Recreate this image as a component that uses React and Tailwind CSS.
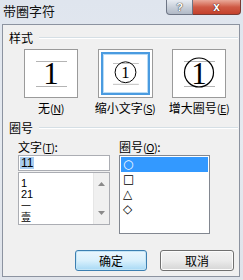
import React from 'react';

const cjk = { fontFamily: '"Noto Sans CJK SC", "Liberation Sans", sans-serif' };
const shapes = { fontFamily: '"DejaVu Sans", sans-serif' };

function Acc({ k }) {
  return (
    <span className="text-[11px] tracking-[-0.5px]">
      (<span className="underline">{k}</span>)
    </span>
  );
}

function GroupHeader({ title }) {
  return (
    <div className="flex items-center h-[14px] pl-[6px]">
      <span className="text-[12px] leading-[14px]">{title}</span>
      <div className="flex-1 ml-[6px] mr-[1px] border-t border-[#d5dfe5] border-b-white border-b h-0" />
    </div>
  );
}

function Preview({ kind }) {
  return (
    <svg width="54" height="49" viewBox="0 0 54 49">
      <line x1="12" y1="12.5" x2="43" y2="12.5" stroke="#b4b4b4" />
      <line x1="12" y1="37.5" x2="43" y2="37.5" stroke="#b4b4b4" />
      {kind === 'none' && (
        <text x="27" y="35" textAnchor="middle" fontFamily="Liberation Serif" fontSize="31" fill="#000">1</text>
      )}
      {kind === 'small' && (
        <>
          <circle cx="27" cy="23" r="12.5" fill="none" stroke="#000" strokeWidth="1.2" />
          <text x="27" y="30" textAnchor="middle" fontFamily="Liberation Serif" fontSize="20" fill="#000">1</text>
        </>
      )}
      {kind === 'big' && (
        <>
          <circle cx="27" cy="23.5" r="14.5" fill="none" stroke="#000" strokeWidth="1.2" />
          <text x="27" y="35" textAnchor="middle" fontFamily="Liberation Serif" fontSize="31" fill="#000">1</text>
        </>
      )}
    </svg>
  );
}

export default function App() {
  return (
    <div
      className="w-[243px] h-[280px] flex flex-col bg-gradient-to-b from-[#dfe5ee] via-[#e6eaf0] to-[#dfe3ea] text-black overflow-hidden"
      style={cjk}
    >
      {/* Title bar */}
      <div className="h-[24px] flex items-start shrink-0">
        <div className="pl-[3px] pt-[2px] text-[13px] leading-[18px] text-[#111]">带圈字符</div>
        <div className="ml-auto mr-[2px] flex">
          <div className="w-[27px] h-[15px] rounded-bl-[4px] border border-t-0 border-[#6d7585] bg-gradient-to-b from-[#e8ecf2] via-[#c9d0da] to-[#b0b9c6] flex items-center justify-center">
            <span className="text-[11px] leading-[11px] font-bold text-white [text-shadow:0_0_1px_#333,0_0_1px_#333]" style={{ fontFamily: 'Liberation Sans' }}>?</span>
          </div>
          <div className="w-[48px] h-[15px] rounded-br-[4px] border border-l-0 border-t-0 border-[#7a3a33] bg-gradient-to-b from-[#e9a99a] via-[#cf5a45] to-[#c4412c] flex items-center justify-center">
            <span className="text-[12px] leading-[12px] font-bold text-white [text-shadow:0_0_1px_#4a1a10,0_0_1px_#4a1a10]" style={{ fontFamily: 'Liberation Sans' }}>x</span>
          </div>
        </div>
      </div>

      {/* Client area */}
      <div className="flex-1 ml-[2px] mr-[3px] mb-[3px] border border-[#8c93a0] bg-[#f0f0f0] flex flex-col text-[12px] leading-[14px]">
        <div className="mt-[6px]">
          <GroupHeader title="样式" />
        </div>

        <div className="flex pl-[11px] mt-[4px]">
          <div className="w-[74px] flex flex-col items-center">
            <div className="w-[54px] h-[49px] border border-[#9a9a9a] bg-white">
              <div className="-m-px"><Preview kind="none" /></div>
            </div>
            <div className="mt-[3px] h-[14px]">无<Acc k="N" /></div>
          </div>
          <div className="w-[74px] flex flex-col items-center">
            <div className="w-[55px] h-[49px] border border-[#9a9a9a] bg-white p-[2px]">
              <div className="w-full h-full border-2 border-[#4a9be0] shadow-[inset_0_0_0_1px_#b9dcf6] flex items-center justify-center overflow-hidden">
                <Preview kind="small" />
              </div>
            </div>
            <div className="mt-[3px] h-[14px] whitespace-nowrap">缩小文字<Acc k="S" /></div>
          </div>
          <div className="w-[74px] flex flex-col items-center">
            <div className="w-[54px] h-[49px] border border-[#9a9a9a] bg-white">
              <div className="-m-px"><Preview kind="big" /></div>
            </div>
            <div className="mt-[3px] h-[14px] whitespace-nowrap">增大圈号<Acc k="E" /></div>
          </div>
        </div>

        <div className="mt-[6px]">
          <GroupHeader title="圈号" />
        </div>

        <div className="flex pl-[15px] mt-[5px] gap-[9px]">
          {/* 文字 column */}
          <div className="w-[92px] flex flex-col">
            <div className="h-[14px]">文字<Acc k="T" />:</div>
            <div className="mt-[1px] h-[16px] border border-[#abadb3] bg-white flex items-center pl-[1px]">
              <span className="bg-[#a8cdf0] px-[1px] text-[12px] leading-[12px] h-[12px]" style={{ fontFamily: 'Liberation Sans' }}>11</span>
            </div>
            <div className="mt-[1px] h-[53px] border border-[#abadb3] bg-white flex overflow-hidden">
              <div className="flex-1 pl-[2px] pt-[5px] text-[11px]">
                <div className="h-[11px] leading-[11px]" style={{ fontFamily: 'Liberation Sans' }}>1</div>
                <div className="h-[11px] leading-[11px]" style={{ fontFamily: 'Liberation Sans' }}>21</div>
                <div className="h-[11px] leading-[11px] text-[10px]">一</div>
                <div className="h-[11px] leading-[11px] text-[10px]">壹</div>
              </div>
              <div className="w-[16px] bg-[#f0f0f0] border-l border-[#e6e6e6] flex flex-col items-center justify-between py-[9px]">
                <svg width="7" height="4" viewBox="0 0 7 4"><path d="M0 4 L3.5 0 L7 4 Z" fill="#8a8a8a" /></svg>
                <svg width="7" height="4" viewBox="0 0 7 4"><path d="M0 0 L3.5 4 L7 0 Z" fill="#8a8a8a" /></svg>
              </div>
            </div>
          </div>

          {/* 圈号 column */}
          <div className="w-[91px] flex flex-col">
            <div className="h-[14px]">圈号<Acc k="O" />:</div>
            <div className="mt-[1px] h-[79px] border border-[#828790] bg-white p-px text-[12px]" style={shapes}>
              <div className="h-[15px] bg-[#3399ff] text-white pl-[2px] leading-[15px]">○</div>
              <div className="h-[15px] pl-[2px] leading-[15px]">□</div>
              <div className="h-[15px] pl-[2px] leading-[15px]">△</div>
              <div className="h-[15px] pl-[2px] leading-[15px]">◇</div>
            </div>
          </div>
        </div>

        <div className="mt-auto mb-[5px] flex justify-end pr-[5px] gap-[13px]">
          <button className="w-[72px] h-[21px] rounded-[3px] border border-[#3c7fb1] bg-gradient-to-b from-[#eaf6fd] via-[#d9f0fc] to-[#a7d9f5] shadow-[inset_0_0_0_1px_#c4e5f6] text-[12px] leading-[14px]">确定</button>
          <button className="w-[74px] h-[21px] rounded-[3px] border border-[#707070] bg-gradient-to-b from-[#f2f2f2] via-[#ebebeb] to-[#d5d5d5] shadow-[inset_0_0_0_1px_#fcfcfc] text-[12px] leading-[14px]">取消</button>
        </div>
      </div>
    </div>
  );
}
